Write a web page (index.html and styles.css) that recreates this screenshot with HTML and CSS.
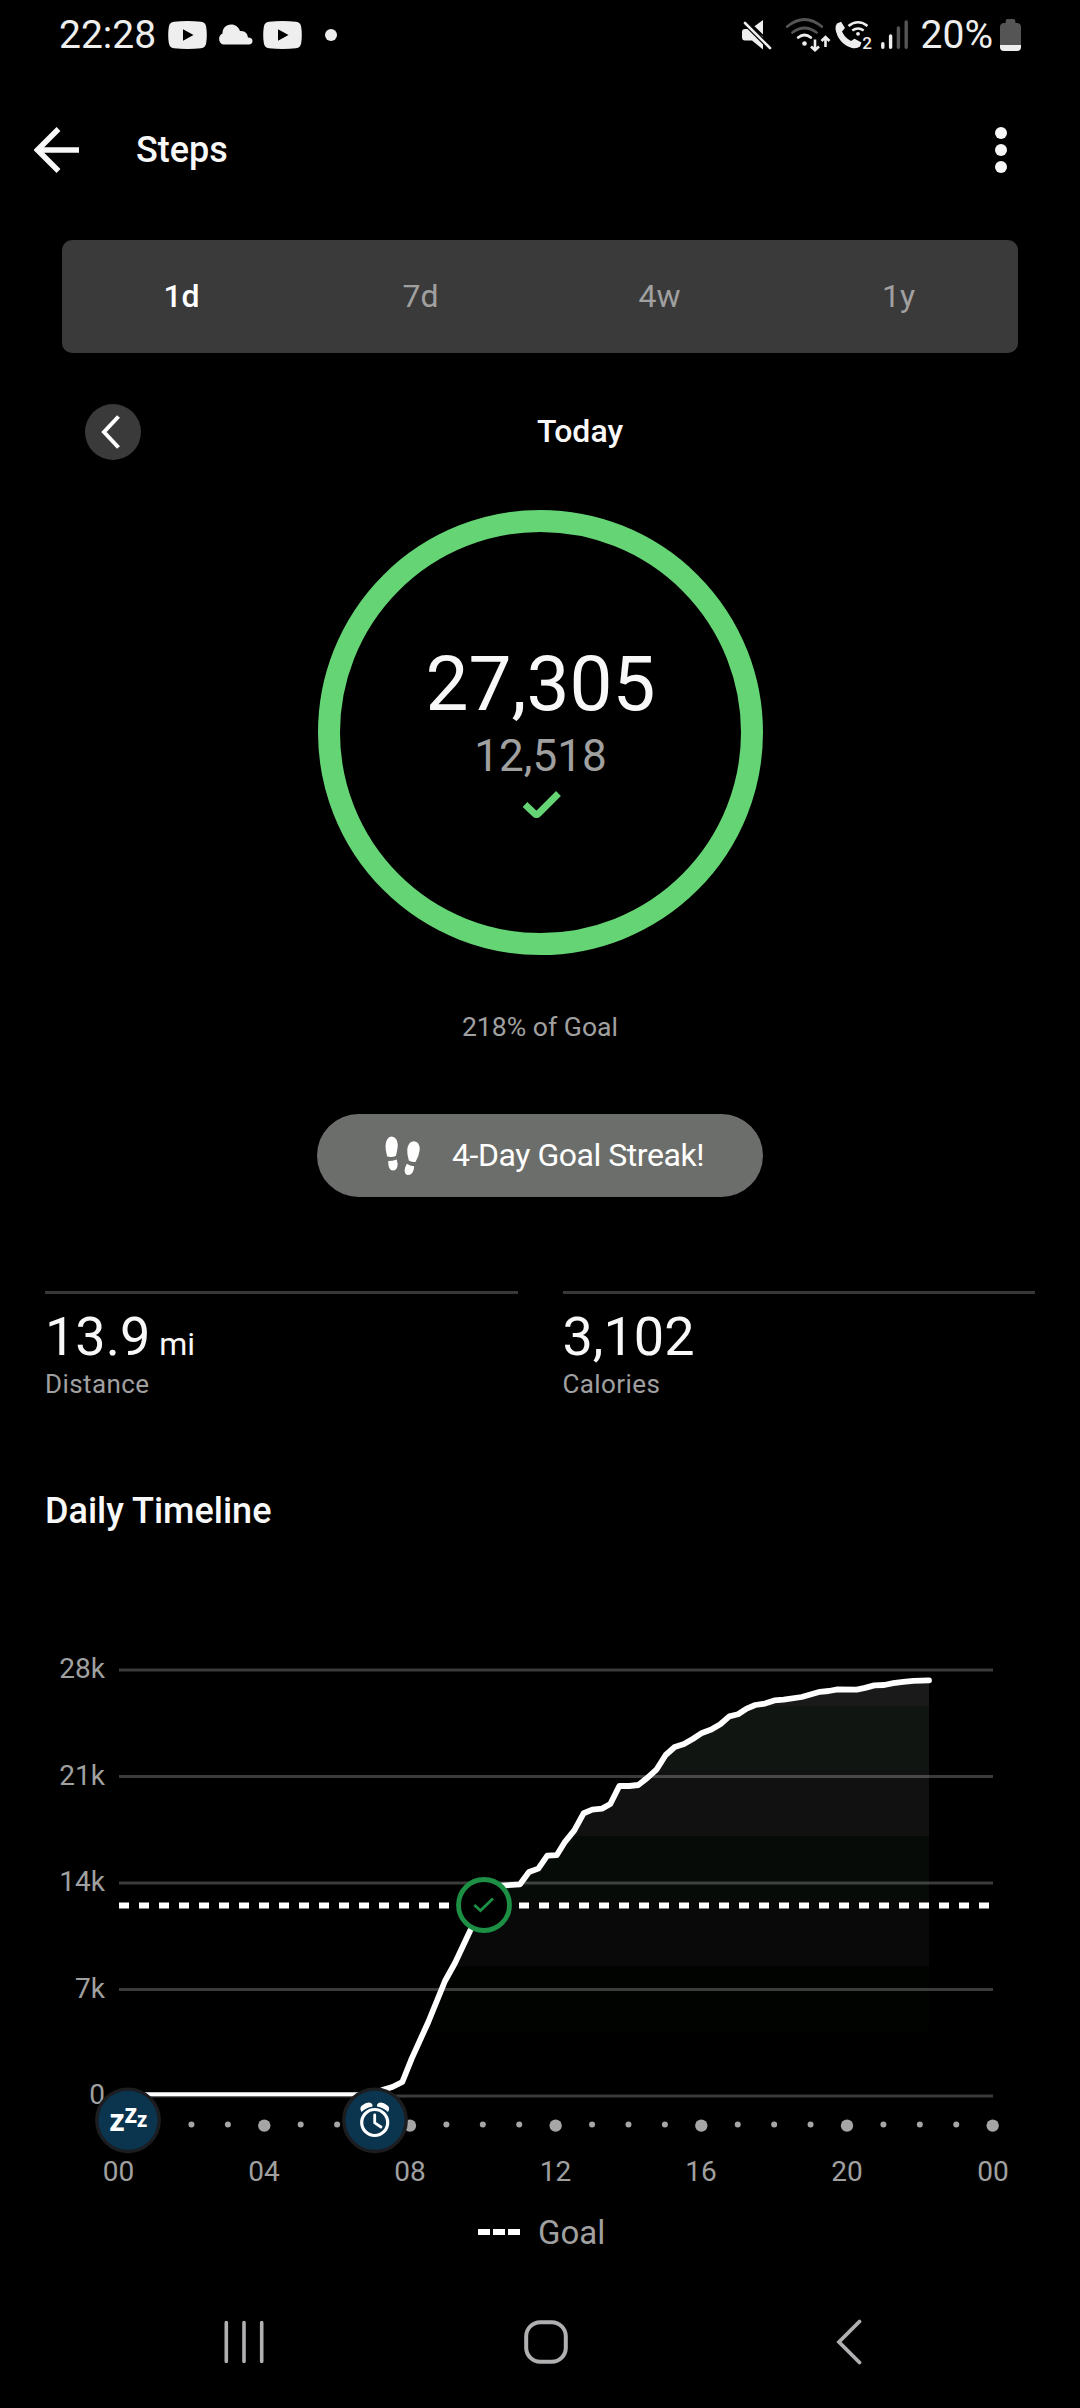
FILE: index.html
```html
<!DOCTYPE html>
<html lang="en">
<head>
    <meta charset="UTF-8">
    <meta name="viewport" content="width=device-width, initial-scale=1.0">
    <title>Steps</title>
    <link rel="stylesheet" href="styles.css">
</head>
<body>
    <div class="status-bar">
        <div class="status-left">
            <span class="clock">22:28</span>
            <svg class="icon-video" width="39" height="28" viewBox="0 0 39 28">
                <path fill="#eee" fill-rule="evenodd" d="M6 .8Q19.500-.6 33 .8Q37.500 1.300 38.200 6Q39.400 14 38.200 22Q37.500 26.700 33 27.200Q19.500 28.600 6 27.200Q1.500 26.700.8 22Q-.4 14 .8 6Q1.500 1.300 6 .8ZM15 8.300V19.700L25.500 14Z"/>
            </svg>
            <svg class="icon-cloud" width="36" height="21" viewBox="0 0 36 21">
                <path fill="#eee" d="M6 20.500A6 6 0 0 1 5.500 9.500C5.500 4 9 .5 14 .5C18.500.5 21.500 3 23 7C28 6.500 30.500 9.500 31 13.500C34 13.500 35.500 15 35.500 17C35.500 19 34 20.500 32 20.500Z"/>
            </svg>
            <svg class="icon-video" width="39" height="28" viewBox="0 0 39 28">
                <path fill="#eee" fill-rule="evenodd" d="M6 .8Q19.500-.6 33 .8Q37.500 1.300 38.200 6Q39.400 14 38.200 22Q37.500 26.700 33 27.200Q19.500 28.600 6 27.200Q1.500 26.700.8 22Q-.4 14 .8 6Q1.500 1.300 6 .8ZM15 8.300V19.700L25.500 14Z"/>
            </svg>
            <span class="more-dot"></span>
        </div>

        <div class="status-right">
            <svg width="176" height="40" viewBox="736 15 176 40" fill="#eee">
                <!-- muted speaker -->
                <path d="M744 29H752L762 37V49.500L751 40.500H744Q741 40.500 741 37V32Q741 29 744 29ZM753.500 26.200L762 20V34.500Z"/>
                <path d="M744 23L769 48" stroke="#000" stroke-width="5"/>
                <path d="M744 23L769 48" stroke="#eee" stroke-width="2.600" stroke-linecap="round"/>
                <!-- wifi -->
                <g fill="none" stroke-width="2.800" stroke-linecap="round">
                    <path stroke="#555" d="M786.300 26.500Q803.500 12.500 820.700 26.500M791.500 32.500Q803.500 23.500 815.500 32.500"/>
                    <path stroke="#eee" d="M797.200 37.500Q803.500 32.500 809.800 37.500"/>
                </g>
                <circle cx="803.500" cy="43.500" r="2.300"/>
                <path d="M814 39.500V49.500M810 46.500L814 50.300L818 46.500M824.500 47V37.500M820.500 41L824.500 37L828.500 41" fill="none" stroke="#eee" stroke-width="2.600"/>
                <!-- wifi calling -->
                <path d="M836 23.500L840 21.800L844 28L841 31.500Q844 38 850 41L853.500 38.800L860.500 42.500L859 46.500Q856 49 851 48Q837 43.500 834.500 29Q834.300 25.500 836 23.500Z"/>
                <path d="M847.500 26Q857 18.500 866.500 26M851.300 30.500Q857 26.500 862.700 30.500" fill="none" stroke="#eee" stroke-width="2.600"/>
                <circle cx="857" cy="33.800" r="1.900"/>
                <text class="sim" x="861.300" y="49">2</text>
                <!-- signal -->
                <path d="M881.800 43.800V47.200M889.600 36V47.200" stroke="#eee" stroke-width="3.400" stroke-linecap="round"/>
                <path d="M897.400 28V47.200M905.200 22V47.200" stroke="#555" stroke-width="3.400" stroke-linecap="round"/>
            </svg>
            <span class="battery-text">20%</span>
            <svg class="icon-battery" width="21" height="32" viewBox="0 0 21 32">
                <path fill="#555" d="M7 0H14Q15 0 15.200 1.500L15.500 4H17.500Q21 4.500 21 8V26H0V8Q0 4.500 3.500 4H5.500L5.800 1.500Q6 0 7 0Z"/>
                <path fill="#eee" d="M0 26H21V28Q21 32 17 32H4Q0 32 0 28Z"/>
            </svg>
        </div>
    </div>

    <header class="app-bar">
        <svg width="46" height="46" viewBox="0 0 46 46" fill="none" stroke="#f8f8f8" stroke-width="5.500">
            <path d="M24.500 2L3.500 23L24.500 44M3.500 23H45"/>
        </svg>
        <h1 class="app-title">Steps</h1>
        <div class="menu">
            <span></span>
            <span></span>
            <span></span>
        </div>
    </header>

    <nav class="range-tabs">
        <div class="tab active">1d</div>
        <div class="tab">7d</div>
        <div class="tab">4w</div>
        <div class="tab">1y</div>
    </nav>

    <div class="date-nav">
        <div class="prev-btn">
            <svg width="20" height="34" viewBox="0 0 20 34" fill="none" stroke="#fff" stroke-width="4">
                <path d="M17.500 1.500L3 17L17.500 32.500"/>
            </svg>
        </div>
        <div class="date-label">Today</div>
    </div>

    <div class="ring">
        <div class="ring-value">27,305</div>
        <div class="ring-goal">12,518</div>
        <svg class="ring-check" width="40" height="29" viewBox="0 0 40 29">
            <path d="M3 13.500L12.500 22.500Q14.500 24.500 16.500 22.500L36.500 2.500" fill="none" stroke="#65d474" stroke-width="6.800"/>
        </svg>
    </div>

    <div class="goal-percent">218% of Goal</div>

    <div class="streak">
        <svg width="36" height="40" viewBox="0 0 36 40" fill="#fff">
            <path d="M2.200 20.500Q.5 15 .5 10Q1 1 6.500.5Q12.500 1 12.800 9Q12.700 13 10.800 20Q6.500 21.500 2.200 20.500Z"/>
            <path d="M3.200 25Q7.500 25 11.700 23.500Q13.200 28 12.300 31Q11 34.500 8 34.500Q3 34.500 3.200 25Z"/>
            <path d="M23.800 24.500Q21.800 18 22.300 13Q23.500 5.300 29 5.200Q35 6 34.700 14Q34 20 30.500 26Q27.500 26.500 23.800 24.500Z"/>
            <path d="M21.800 27.800Q25 30.200 29.200 30.200Q29 34 27.500 36.500Q25.500 39.500 22.500 39Q17 37 21.800 27.800Z"/>
        </svg>
        <span>4-Day Goal Streak!</span>
    </div>

    <div class="stats">
        <div class="stat">
            <div class="stat-value">13.9<span class="unit">mi</span></div>
            <div class="stat-label">Distance</div>
        </div>
        <div class="stat">
            <div class="stat-value">3,102</div>
            <div class="stat-label">Calories</div>
        </div>
    </div>

    <h2 class="section-title">Daily Timeline</h2>

    <svg class="chart" width="1080" height="560" viewBox="0 1640 1080 560">
        <defs>
            <linearGradient id="area" gradientUnits="userSpaceOnUse" x1="0" y1="1641" x2="0" y2="2096">
                <stop offset="0.1429" stop-color="#1a1a1a"/>
                <stop offset="0.1429" stop-color="#101511"/>
                <stop offset="0.2857" stop-color="#101511"/>
                <stop offset="0.2857" stop-color="#111111"/>
                <stop offset="0.4286" stop-color="#111111"/>
                <stop offset="0.4286" stop-color="#060b07"/>
                <stop offset="0.5714" stop-color="#060b07"/>
                <stop offset="0.5714" stop-color="#090909"/>
                <stop offset="0.7143" stop-color="#090909"/>
                <stop offset="0.7143" stop-color="#000300"/>
                <stop offset="0.8571" stop-color="#000300"/>
                <stop offset="0.8571" stop-color="#000000"/>
            </linearGradient>
            <clipPath id="plot">
                <rect x="110" y="1640" width="900" height="456.200"/>
            </clipPath>
        </defs>

        <path id="fill" fill="url(#area)"/>
        <g class="grid">
            <path d="M119 1670H993M119 1776.500H993M119 1883H993M119 1989.500H993M119 2096H993"/>
        </g>
        <path class="goal-line" d="M119 1905.500H993"/>
        <path id="line" class="steps-line" clip-path="url(#plot)"/>

        <g class="y-labels">
            <text x="105" y="1678">28k</text>
            <text x="105" y="1784.500">21k</text>
            <text x="105" y="1891">14k</text>
            <text x="105" y="1997.500">7k</text>
            <text x="105" y="2104">0</text>
        </g>

        <g id="ticks" class="ticks"></g>

        <g class="x-labels">
            <text x="118.500" y="2181">00</text>
            <text x="264" y="2181">04</text>
            <text x="410" y="2181">08</text>
            <text x="555.500" y="2181">12</text>
            <text x="701" y="2181">16</text>
            <text x="847" y="2181">20</text>
            <text x="993" y="2181">00</text>
        </g>

        <!-- goal reached -->
        <circle cx="484" cy="1905" r="25.500" fill="#000" stroke="#1c8f45" stroke-width="4.800"/>
        <path d="M474.300 1905L480.500 1910.500L493 1898.500" fill="none" stroke="#1c8f45" stroke-width="2.800"/>

        <!-- asleep -->
        <circle class="marker" cx="128" cy="2120.300" r="31.200"/>
        <g class="zzz">
            <text x="109.500" y="2131" font-size="31">z</text>
            <text x="124.500" y="2123" font-size="26">z</text>
            <text x="137" y="2126.500" font-size="21">z</text>
        </g>

        <!-- wake up -->
        <circle class="marker" cx="375" cy="2120.300" r="31.200"/>
        <circle cx="374.700" cy="2122.500" r="13" fill="none" stroke="#fff" stroke-width="3.200"/>
        <path d="M374.700 2115V2122.800L381 2127" fill="none" stroke="#fff" stroke-width="2.800" stroke-linecap="round"/>
        <path fill="#fff" d="M361.500 2112Q359 2108 362 2105.500Q367 2101.500 371 2103Q373 2104 372.500 2106.500Q366 2107.500 361.500 2112ZM388 2112Q390.500 2108 387.500 2105.500Q382.500 2101.500 378.500 2103Q376.500 2104 377 2106.500Q383.500 2107.500 388 2112Z"/>
    </svg>

    <div class="legend">
        <div class="legend-dashes">
            <span></span>
            <span></span>
            <span></span>
        </div>
        <span class="legend-text">Goal</span>
    </div>

    <div class="nav-bar">
        <svg width="40" height="44" viewBox="0 0 40 44" stroke="#b0afb2" stroke-width="3.600" stroke-linecap="round">
            <path d="M2.300 2.500V41.500M20 2.500V41.500M37.700 2.500V41.500"/>
        </svg>
        <svg class="nav-home" width="44" height="44" viewBox="0 0 44 44" fill="none" stroke="#b0afb2" stroke-width="4">
            <rect x="2.200" y="2.200" width="39.600" height="39.600" rx="14"/>
        </svg>
        <svg width="26" height="46" viewBox="0 0 26 46" fill="none" stroke="#b0afb2" stroke-width="3.800" stroke-linecap="round">
            <path d="M23.500 2.500L3 23L23.500 43.500"/>
        </svg>
    </div>

    <script>
        const points = [
            [119, 2095.2], [370, 2095.2], [384, 2089.5], [392.3, 2087], [402.3, 2082],
            [411.7, 2058.6], [428.3, 2022], [445, 1981], [455, 1963], [470, 1931],
            [484, 1905], [497, 1886], [505, 1885.4], [520, 1884.3], [529, 1872],
            [538.3, 1868.6], [547.3, 1855.7], [556.7, 1855.2], [565, 1841.8], [574.3, 1830.4],
            [583.7, 1813.2], [592.3, 1809.6], [602, 1808.6], [610.3, 1804], [619.3, 1786],
            [629.3, 1786], [638.3, 1785], [647.3, 1777.9], [656.7, 1769.3], [665.7, 1755],
            [674.7, 1747], [684, 1744], [692.7, 1739], [702, 1732.9], [711.3, 1729.6],
            [720.3, 1724.3], [729.3, 1716.4], [738, 1714.3], [746.7, 1708.6], [755.3, 1705],
            [765, 1703.6], [774.3, 1700.4], [783.7, 1699.6], [801.7, 1697], [820, 1691.8],
            [828.7, 1691], [837.7, 1689.3], [856.7, 1689.6], [865, 1687.9], [874.3, 1685.4],
            [884.3, 1685], [893.3, 1683.2], [903.3, 1681.8], [913.3, 1680.9], [929, 1680.4]
        ];
        const path = 'M' + points.map(p => p.join(' ')).join('L');
        document.getElementById('line').setAttribute('d', path);
        document.getElementById('fill').setAttribute('d', path + 'V2096H119Z');

        // one dot per hour, a bigger one every four hours
        let dots = '';
        for (let hour = 1; hour <= 24; hour++) {
            const x = 118.6 + hour * 36.42;
            const big = hour % 4 === 0;
            dots += `<circle cx="${x}" cy="${big ? 2125.6 : 2124.4}" r="${big ? 6.2 : 3}"/>`;
        }
        document.getElementById('ticks').innerHTML = dots;
    </script>
</body>
</html>
```
FILE: styles.css
```css
* {
    box-sizing: border-box;
}

body {
    margin: 0;
    width: 1080px;
    height: 2408px;
    display: flex;
    flex-direction: column;
    background-color: #000;
    color: #f8f8f8;
    font-family: Roboto, sans-serif;
    overflow: hidden;
}

svg {
    display: block;
    flex-shrink: 0;
}

h1, h2 {
    margin: 0;
    font-weight: 500;
}

/* Status bar */
.status-bar {
    display: flex;
    justify-content: space-between;
    align-items: center;
    height: 70px;
    padding: 0 59px;
    color: #eee;
    font-size: 39px;
    line-height: 46px;
}

.status-left,
.status-right {
    display: flex;
    align-items: center;
}

.clock {
    width: 96px;
}

.icon-video {
    margin-left: 13px;
}

.icon-cloud {
    margin: 0 -3px 2px 10px;
}

.more-dot {
    width: 12px;
    height: 12px;
    margin-left: 23px;
    border-radius: 50%;
    background-color: #eee;
}

.sim {
    font-size: 17px;
    font-weight: 500;
}

.battery-text {
    margin-left: 8px;
}

.icon-battery {
    margin-left: 7px;
}

/* App bar */
.app-bar {
    display: flex;
    align-items: center;
    height: 160px;
    padding: 0 73px 0 34px;
}

.app-title {
    margin-left: 56px;
    font-size: 36px;
}

.menu {
    display: flex;
    flex-direction: column;
    gap: 5px;
    margin-left: auto;
}

.menu span {
    width: 12px;
    height: 12px;
    border-radius: 50%;
    background-color: #f8f8f8;
}

/* Range */
.range-tabs {
    display: grid;
    grid-template-columns: repeat(4, 1fr);
    align-items: center;
    height: 113px;
    margin: 10px 62px 0;
    padding-bottom: 2px;
    border-radius: 10px;
    background-color: #3a3a3a;
}

.tab {
    text-align: center;
    font-size: 32px;
    color: #a0a0a0;
}

.tab.active {
    font-weight: 500;
    color: #fff;
}

.date-nav {
    display: flex;
    align-items: center;
    height: 56px;
    margin: 51px 60px 0 85px;
}

.prev-btn {
    display: flex;
    align-items: center;
    justify-content: center;
    width: 56px;
    height: 56px;
    padding-right: 4px;
    border-radius: 50%;
    background-color: #3a3a3a;
}

.date-label {
    flex: 1;
    padding: 0 1px 2px 0;
    text-align: center;
    font-size: 32px;
    font-weight: 500;
}

/* Ring */
.ring {
    display: flex;
    flex-direction: column;
    align-items: center;
    width: 445px;
    height: 445px;
    margin: 50px 0 0 318px;
    padding-top: 114px;
    border: 22px solid #65d474;
    border-radius: 50%;
}

.ring-value {
    font-size: 76.5px;
    line-height: 77px;
}

.ring-goal {
    margin-top: 11px;
    font-size: 44px;
    line-height: 44px;
    color: #a0a0a0;
}

.ring-check {
    margin: 13px 0 0 2px;
}

.goal-percent {
    margin-top: 52px;
    text-align: center;
    font-size: 26.6px;
    line-height: 40px;
    color: #a0a0a0;
}

.streak {
    display: flex;
    align-items: center;
    width: 446px;
    height: 83px;
    margin: 67px 0 0 317px;
    padding-left: 68px;
    border-radius: 42px;
    background-color: #6c6e6b;
    color: #fff;
    font-size: 32px;
}

.streak span {
    margin-left: 31px;
    padding-bottom: 1px;
    letter-spacing: -0.45px;
}

/* Stats */
.stats {
    display: grid;
    grid-template-columns: 1fr 1fr;
    gap: 45px;
    margin: 94px 45px 0;
}

.stat {
    padding-top: 13px;
    border-top: 3px solid #383838;
}

.stat-value {
    font-size: 54px;
    line-height: 60px;
}

.unit {
    margin-left: 9px;
    font-size: 32px;
    line-height: 1;
}

.stat-label {
    margin-top: 1px;
    font-size: 26px;
    line-height: 32px;
    letter-spacing: 0.4px;
    color: #a0a0a0;
}

.section-title {
    margin: 91px 0 0 45px;
    font-size: 36px;
    line-height: 40px;
}

/* Chart */
.chart {
    margin-top: 109px;
}

.grid {
    stroke: rgba(255, 255, 255, 0.23);
    stroke-width: 3;
}

.goal-line {
    stroke: #fff;
    stroke-width: 6;
    stroke-dasharray: 10 10;
}

.steps-line {
    fill: none;
    stroke: #fff;
    stroke-width: 5.8;
    stroke-linejoin: round;
    stroke-linecap: round;
}

.y-labels,
.x-labels {
    fill: #a0a0a0;
    font-size: 28px;
}

.y-labels {
    text-anchor: end;
}

.x-labels {
    text-anchor: middle;
}

.ticks {
    fill: #a6a6a6;
}

.marker {
    fill: #0b344f;
    stroke: #1b1d20;
    stroke-width: 3.4;
}

.zzz {
    fill: #fff;
    font-family: "Open Sans", sans-serif;
    font-weight: 700;
}

.legend {
    display: flex;
    align-items: center;
    margin: 13px 0 0 478px;
    line-height: 40px;
}

.legend-dashes {
    display: flex;
    gap: 3px;
    margin-bottom: 3px;
}

.legend-dashes span {
    width: 12px;
    height: 6px;
    background-color: #fff;
}

.legend-text {
    margin-left: 18px;
    font-size: 33px;
    color: #a0a0a0;
}

/* Bottom navigation */
.nav-bar {
    display: flex;
    justify-content: space-between;
    align-items: center;
    height: 132px;
    margin-top: auto;
    padding: 0 218px 0 224px;
}

.nav-home {
    margin-right: 8px;
}
```
